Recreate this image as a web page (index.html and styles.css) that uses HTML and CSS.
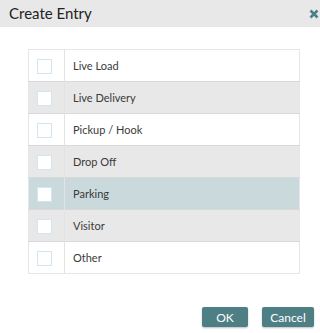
FILE: index.html
```html
<!DOCTYPE html>
<html>
<head>
<meta charset="utf-8">
<link rel="stylesheet" href="styles.css">
</head>
<body>
<div class="dialog">
  <div class="header">
    <span class="title">Create Entry</span>
    <svg class="close" width="10" height="10" viewBox="0 0 10 10"><path d="M1.5 1.5 L8.5 8.5 M8.5 1.5 L1.5 8.5" stroke="#4d7f86" stroke-width="2.6" stroke-linecap="butt"/></svg>
  </div>
  <div class="body">
    <table class="list">
      <tr><td class="cb"><span class="box"></span></td><td class="label">Live Load</td></tr>
      <tr class="alt"><td class="cb"><span class="box"></span></td><td class="label">Live Delivery</td></tr>
      <tr><td class="cb"><span class="box"></span></td><td class="label">Pickup / Hook</td></tr>
      <tr class="alt"><td class="cb"><span class="box"></span></td><td class="label">Drop Off</td></tr>
      <tr class="sel"><td class="cb"><span class="box"></span></td><td class="label">Parking</td></tr>
      <tr class="alt"><td class="cb"><span class="box"></span></td><td class="label">Visitor</td></tr>
      <tr><td class="cb"><span class="box"></span></td><td class="label">Other</td></tr>
    </table>
  </div>
  <div class="footer">
    <button class="btn">OK</button>
    <button class="btn">Cancel</button>
  </div>
</div>
</body>
</html>
```
FILE: styles.css
```css
html, body {
  margin: 0;
  padding: 0;
  background: #fff;
  font-family: Lato, "Open Sans", sans-serif;
}
.dialog {
  width: 320px;
  height: 333px;
}
.header {
  height: 27px;
  background: #e8e8e8;
  display: flex;
  align-items: center;
  justify-content: space-between;
  padding: 0 1px 0 9px;
}
.title {
  font-size: 15px;
  color: #222;
  margin-top: -2px;
}
.close {
  margin-top: 1px;
}
.body {
  padding: 22px 20px 0 28px;
}
.list {
  width: 272px;
  border-collapse: collapse;
  border: 1px solid #e6e6e6;
}
.list tr {
  height: 32px;
  border-top: 1px solid #d9d9d9;
  background: #fff;
}
.list tr:first-child {
  border-top: 1px solid #e6e6e6;
}
.list tr.alt {
  background: #e8e8e8;
}
.list tr.sel {
  background: #c9d9dc;
}
.cb {
  width: 35px;
  padding: 0;
  border-right: 1px solid #e3e3e3;
}
.box {
  display: block;
  width: 13px;
  height: 13px;
  margin-left: 8px;
  margin-top: 1px;
  background: #fff;
  border: 1px solid #d3e5ee;
}
.label {
  padding: 0 0 0 8px;
  font-size: 11px;
  color: #3a3a3a;
}
.footer {
  display: flex;
  justify-content: flex-end;
  gap: 14px;
  padding: 33px 6px 0 0;
}
.btn {
  height: 20px;
  border: none;
  border-radius: 2px;
  background: #4e7f85;
  color: #fff;
  font-family: Lato, "Open Sans", sans-serif;
  font-size: 12px;
  padding: 0;
  box-shadow: 0 1px 2px rgba(0,0,0,0.25);
}
.btn:first-child { width: 46px; }
.btn:last-child { width: 52px; }
```
